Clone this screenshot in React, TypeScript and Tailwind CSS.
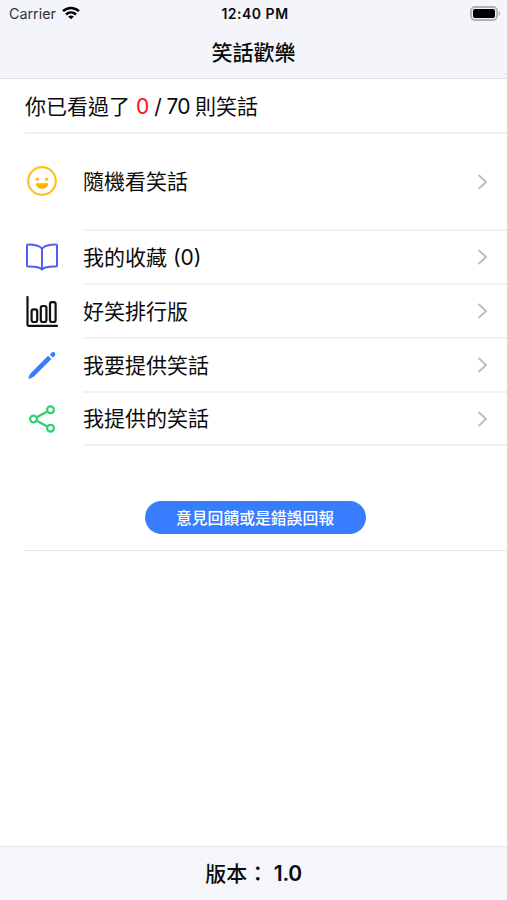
import type { ReactNode } from "react";

const smiley = (
  <svg className="mb-[3px] h-[32px] w-[32px]" viewBox="0 0 32 32" fill="none">
    <circle cx="16" cy="16" r="13.8" stroke="#fbc225" strokeWidth="2.2" />
    <circle cx="11.4" cy="14.2" r="1.8" fill="#fbc225" />
    <circle cx="20.6" cy="14.2" r="1.8" fill="#fbc225" />
    <path d="M10.4 18.3h11.2c.5 0 .7.3.6.7-.6 3-3 4.900-6.200 4.900s-5.600-1.900-6.200-4.900c-.1-.4.1-.7.600-.7z" fill="#fbb400" />
  </svg>
);

const book = (
  <svg className="mb-[2px] h-[32px] w-[32px]" viewBox="0 0 32 32" fill="none" stroke="#5260f0" strokeWidth="2" strokeLinejoin="round" strokeLinecap="round">
    <path d="M16 7.600C13 4.200 7.500 3.600 2 3.600c-.600 0-1 .400-1 1v20c0 .600.400 1 1 1C7.500 25.600 13 25.300 16 28.500c3-3.200 8.500-2.900 14-2.900.600 0 1-.400 1-1v-20c0-.600-.400-1-1-1-5.500 0-11 .600-14 4zM16 7.600V28" />
  </svg>
);

const chart = (
  <svg className="h-[32px] w-[32px]" viewBox="0 0 32 32" fill="none" stroke="#111" strokeWidth="2.200" strokeLinejoin="round" strokeLinecap="round">
    <path d="M1.500 1v27.800c0 .700.300 1 1 1h28.500" />
    <rect x="5.600" y="13.400" width="5.600" height="12.600" rx="2" />
    <rect x="14.800" y="10" width="5.600" height="16" rx="2" />
    <rect x="24" y="6.200" width="5.600" height="19.800" rx="2" />
  </svg>
);

const pencil = (
  <svg className="h-[32px] w-[32px]" viewBox="0 0 32 32" fill="#387cff">
    <path d="M22.100 5.700 4.200 23.700l-1.600 3.300c-.600 1.200.4 2.300 1.600 1.600l3.400-1.800L25.400 8.900z" />
    <path d="m23.900 4.700 1.200-1.700c1-1.200 2.600-1.300 3.600-.4s.9 2.600-.3 3.600l-1.700 1.300z" />
  </svg>
);

const share = (
  <svg className="mb-[1px] h-[32px] w-[32px]" viewBox="0 0 32 32" fill="none" stroke="#2fd16b" strokeWidth="2.200">
    <circle cx="7.500" cy="16" r="3.400" />
    <circle cx="24.500" cy="6.800" r="3.400" />
    <circle cx="24.500" cy="25.200" r="3.400" />
    <path d="m10.700 14.200 10.600-5.700M10.700 17.800l10.600 5.700" />
  </svg>
);

function Row({ icon, label, className }: { icon: ReactNode; label: string; className: string }) {
  return (
    <button className={`flex w-full items-stretch pl-[26px] text-left ${className}`}>
      <span className="flex w-[57px] shrink-0 items-center">{icon}</span>
      <span className="flex grow items-center justify-between border-b-2 border-[#f1f1f1] pr-[18px]">
        <span className="text-[21px] leading-none whitespace-nowrap">{label}</span>
        <svg className="h-[16px] w-[12px]" viewBox="0 0 12 16" fill="none" stroke="#bebebe" strokeWidth="2">
          <path d="m1.500 .900 7.500 7.100-7.500 7.100" />
        </svg>
      </span>
    </button>
  );
}

export default function App() {
  return (
    <div className="flex h-[900px] w-full flex-col overflow-hidden bg-white font-[Inter,'Noto_Sans_CJK_TC',sans-serif] text-[#0b0b0b]">
      <header className="flex h-[79px] shrink-0 flex-col border-b border-[#dfe0e3] bg-[#f4f5fa]">
        <div className="grid h-[27px] grid-cols-[1fr_auto_1fr] items-center pr-[6px] pl-[9px] text-[14px] leading-none">
          <div className="flex items-center gap-[6px] text-[#333]">
            <span className="pt-px text-[14.300px]">Carrier</span>
            <svg className="mb-[2px] h-[14px] w-[18px]" viewBox="0 0 18 14" fill="none" stroke="#000" strokeWidth="2.500">
              <path d="M1 5.200c4.700-4.400 11.300-4.400 16 0M4 8.500c3-2.800 7-2.800 10 0" />
              <path d="M9 13.300 6.100 10.600c1.700-1.500 4.100-1.500 5.800 0z" fill="#000" stroke="none" />
            </svg>
          </div>
          <div className="pt-px text-center text-[14px] font-semibold tracking-[0.500px] whitespace-nowrap">12:40 PM</div>
          <svg className="h-[15px] w-[31px] justify-self-end" viewBox="0 0 31 15" fill="none">
            <rect x="1" y="1" width="26" height="13" rx="4" stroke="#b1b1b4" strokeWidth="1.800" />
            <rect x="3" y="3" width="22" height="9" rx="2" fill="#000" />
            <path d="M28.700 5v5c2-.800 2-4.200 0-5z" fill="#b1b1b4" />
          </svg>
        </div>
        <h1 className="flex h-[51px] items-center justify-center text-[21px] leading-none font-medium">笑話歡樂</h1>
      </header>

      <main className="flex grow flex-col">
        <p className="ml-[25px] flex h-[55px] shrink-0 items-center border-b-2 border-[#f1f1f1] pt-[2px] text-[21px] leading-none whitespace-pre">
          你已看過了 <span className="text-[#ff0d17]">0</span>
          <span className="tracking-[-0.700px]"> / 70 </span>則笑話
        </p>
        <Row icon={smiley} label="隨機看笑話" className="h-[97px]" />
        <Row icon={book} label="我的收藏 (0)" className="h-[54px]" />
        <Row icon={chart} label="好笑排行版" className="h-[54px]" />
        <Row icon={pencil} label="我要提供笑話" className="h-[54px]" />
        <Row icon={share} label="我提供的笑話" className="h-[53px]" />
        <div className="ml-[25px] flex h-[105px] shrink-0 items-end justify-center border-b border-[#e5e5e5] pr-[22px] pb-[16px]">
          <button className="h-[33px] w-[221px] rounded-full bg-[#387cff] pt-[2px] text-[15.800px] leading-none font-medium text-white">意見回饋或是錯誤回報</button>
        </div>
      </main>

      <footer className="flex h-[54px] shrink-0 items-center justify-center border-t border-[#e4e6e9] bg-[#f4f6fa] text-[21px] leading-none font-medium whitespace-pre">
        版本： <span className="font-semibold tracking-[-0.300px]">1.0</span>
      </footer>
    </div>
  );
}
